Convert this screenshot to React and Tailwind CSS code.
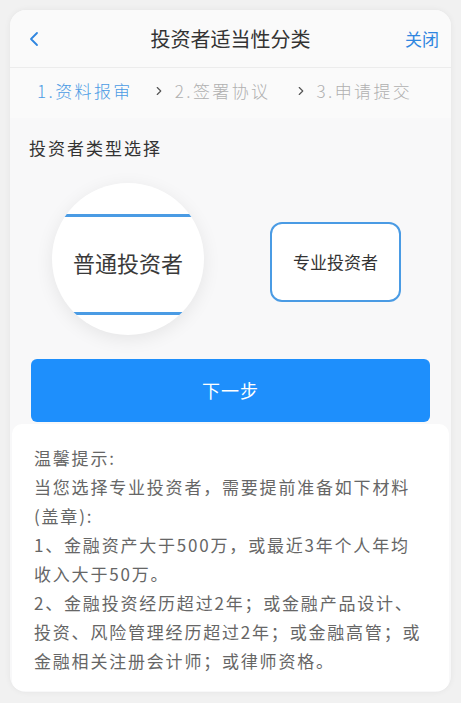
import { ChevronLeft, ChevronRight } from "lucide-react";

const steps = [
  { label: "1.资料报审", active: true },
  { label: "2.签署协议", active: false },
  { label: "3.申请提交", active: false },
];

const tips = [
  "温馨提示:",
  "当您选择专业投资者，需要提前准备如下材料",
  "(盖章):",
  "1、金融资产大于500万，或最近3年个人年均",
  "收入大于50万。",
  "2、金融投资经历超过2年；或金融产品设计、",
  "投资、风险管理经历超过2年；或金融高管；或",
  "金融相关注册会计师；或律师资格。",
];

export default function App() {
  return (
    <div
      className="w-[461px] h-[703px] overflow-hidden bg-[#f1f1f1] px-[10px] pt-[10px]"
      style={{ fontFamily: '"Noto Sans CJK SC", "Noto Sans", sans-serif' }}
    >
      <div className="h-[682px] rounded-[16px] bg-[#f8f8f9] shadow-[0_0_6px_rgba(0,0,0,0.06)] overflow-hidden">
        {/* header */}
        <div className="h-[58px] flex items-center justify-between pl-[12px] pr-[12px] border-b border-[#ececec] bg-[#fafafa]">
          <ChevronLeft className="w-[24px] h-[24px] text-[#2f86e0]" strokeWidth={1.8} />
          <div className="text-[20px] font-normal text-[#333] ml-[10px]">投资者适当性分类</div>
          <div className="text-[17px] text-[#2f86e0]">关闭</div>
        </div>

        {/* steps */}
        <div className="h-[50px] flex items-center pl-[27px] pb-[4px] bg-[#fafafa]">
          {steps.map((s, i) => (
            <div key={s.label} className="flex items-center">
              {i > 0 && (
                <ChevronRight
                  className={`w-[14px] h-[14px] text-[#555] mr-[9px] ${i === 1 ? "ml-[19px]" : "ml-[23px]"}`}
                  strokeWidth={2}
                />
              )}
              <span
                className={`text-[17px] tracking-[2.4px] font-light ${s.active ? "text-[#4a9be4]" : "text-[#b0b0b0]"}`}
              >
                {s.label}
              </span>
            </div>
          ))}
        </div>

        {/* investor type */}
        <div className="bg-[#f8f8f9] pt-[17px]">
          <div className="pl-[19px] text-[17px] tracking-[2px] text-[#333]">投资者类型选择</div>

          <div className="flex items-center mt-[22px]">
            <div className="ml-[42px] w-[152px] h-[152px] rounded-full bg-white shadow-[0_4px_18px_rgba(0,0,0,0.08)] overflow-hidden flex flex-col pt-[31px]">
              <div className="h-[101px] w-full border-y-[3px] border-[#4a9be4] flex items-center justify-center">
                <span className="text-[22px] text-[#3a3a3a] -mt-[4px]">普通投资者</span>
              </div>
            </div>
            <div className="ml-[66px] w-[131px] h-[80px] rounded-[12px] border-2 border-[#4a9be4] bg-white flex items-center justify-center mt-[6px]">
              <span className="text-[17px] text-[#333]">专业投资者</span>
            </div>
          </div>

          <div className="px-[21px] mt-[24px]">
            <button className="w-full h-[63px] rounded-[6px] bg-[#1e8ffc] text-white text-[18px] tracking-[1px]">
              下一步
            </button>
          </div>
        </div>

        {/* tips */}
        <div className="mx-[2px] mt-[2px] bg-white rounded-[10px] pl-[22px] pt-[19px] pb-[16px]">
          {tips.map((t) => (
            <div key={t} className="text-[17px] leading-[29px] tracking-[1.8px] text-[#666] whitespace-nowrap">
              {t}
            </div>
          ))}
        </div>
      </div>
    </div>
  );
}
